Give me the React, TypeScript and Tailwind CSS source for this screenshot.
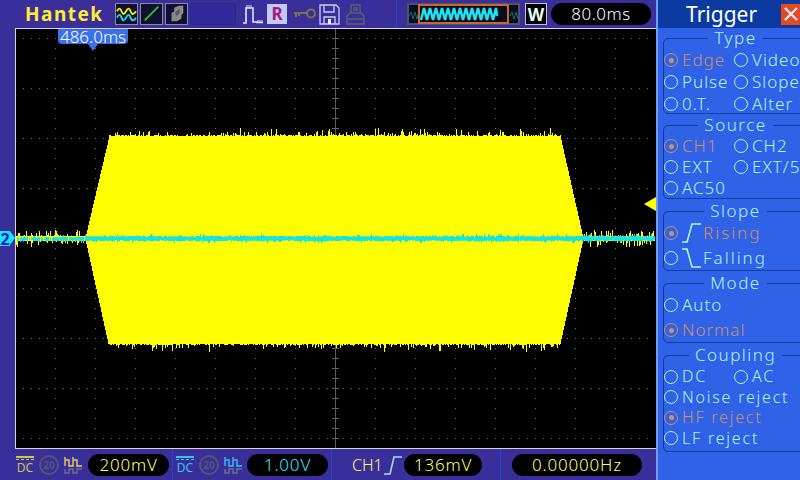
import type { ReactNode } from 'react';

function rng(seed: number) {
  let s = seed;
  return () => {
    s = (s * 1664525 + 1013904223) % 4294967296;
    return s / 4294967296;
  };
}

function spike(r: () => number) {
  const v = r();
  if (v > 0.96) return 5 + Math.floor(r() * 4);
  if (v > 0.8) return 2 + Math.floor(r() * 3);
  return Math.floor(r() * 2);
}

// waveform columns, in page coordinates
function buildWave() {
  const r = rng(7);
  let yellow = '';
  let cyan = '';
  for (let x = 16; x < 655; x++) {
    let top = 236 - (r() > 0.7 ? 1 + Math.floor(r() * 6) : 0);
    let bottom = 240 + (r() > 0.7 ? 1 + Math.floor(r() * 6) : 0);
    const inside = x >= 85 && x <= 583;
    if (inside) {
      let t = 136;
      let b = 343;
      if (x < 109) {
        t = 238 - ((x - 85) * 102) / 24;
        b = 238 + ((x - 85) * 105) / 23;
      } else if (x > 560) {
        t = 238 - ((583 - x) * 102) / 23;
        b = 238 + ((583 - x) * 105) / 23;
      }
      const flat = x >= 109 && x <= 560;
      top = Math.round(t) - (flat ? spike(r) : 0);
      bottom = Math.round(b) + (flat ? spike(r) : 0);
    }
    yellow += `M${x} ${top}V${bottom + 1}`;
    const ct = 236 + (r() > 0.75 ? 1 : 0) - (r() > 0.88 ? 1 + Math.floor(r() * 2) : 0);
    const cb = 241 - (r() > 0.75 ? 1 : 0) + (r() > 0.88 ? 1 + Math.floor(r() * 2) : 0);
    // the trace is thinner and broken where it runs next to the yellow noise on the left
    if (x >= 85 || r() > 0.2) cyan += `M${x} ${x < 85 ? ct + 1 : ct}V${cb}`;
  }
  return { yellow, cyan };
}

const wave = buildWave();

function Grid() {
  const dots: ReactNode[] = [];
  for (let y = 38; y < 448; y += 50) {
    for (let x = 23; x < 655; x += 8) {
      dots.push(<rect key={`h${y}-${x}`} x={x} y={y} width={1} height={1} fill="#757575" />);
    }
  }
  for (let x = 55; x < 655; x += 40) {
    if (x === 335) continue;
    for (let y = 48; y < 448; y += 10) {
      dots.push(<rect key={`v${x}-${y}`} x={x} y={y} width={1} height={1} fill="#757575" />);
    }
  }
  for (let y = 38; y < 448; y += 10) {
    dots.push(<rect key={`t${y}`} x={332} y={y} width={7} height={1} fill="#666" />);
  }
  for (let x = 23; x < 655; x += 8) {
    dots.push(<rect key={`c${x}`} x={x} y={235} width={1} height={7} fill="#666" />);
  }
  return <g>{dots}</g>;
}

function Plot() {
  return (
    <div className="relative flex-1 border-t border-b border-l border-[#d5d5f2] bg-black">
      <svg className="block h-[419px] w-[640px]" viewBox="16 29 640 419" shapeRendering="crispEdges">
        <Grid />
        <rect x={335} y={29} width={1} height={419} fill="#5c5c5c" />
        <path d={wave.yellow} stroke="#ffff00" strokeWidth={1} fill="none" />
        <path d={wave.cyan} stroke="#11e5e5" strokeWidth={1} fill="none" />
      </svg>
      <div className="absolute top-0 left-[42px] flex h-[15px] w-[70px] items-center justify-center rounded-b-[4px] bg-[#3a70ea] text-[17px] leading-none font-light text-white">
        486.0ms
        <div className="absolute top-[15px] left-[30px] h-0 w-0 border-x-[5px] border-t-[7px] border-x-transparent border-t-[#3a70ea]" />
      </div>
      <div className="absolute top-[168px] right-0 h-0 w-0 border-y-[7px] border-r-[12px] border-y-transparent border-r-[#ffff00]" />
    </div>
  );
}

function IconBox({ children }: { children: ReactNode }) {
  return <div className="h-[22px] w-[23px] border border-[#8a8a9a] bg-[#101030]">{children}</div>;
}

function TopBar() {
  return (
    <div className="flex h-[28px] items-center bg-[#3a2e9a]">
      <div className="ml-[25px] w-[78px] font-['DejaVu_Sans',sans-serif] text-[19px] leading-none font-bold tracking-[1.5px] whitespace-nowrap text-[#ffee33]">Hantek</div>
      <div className="ml-[12px] flex gap-[2px]">
        <IconBox>
          <svg viewBox="0 0 23 22" className="h-full w-full" fill="none" strokeWidth={2}>
            <path d="M1 8q3-6 5 0t5 0 5 0 6 0" stroke="#ffee00" />
            <path d="M1 15q3-6 5 0t5 0 5 0 6 0" stroke="#19e0f0" />
          </svg>
        </IconBox>
        <IconBox>
          <svg viewBox="0 0 23 22" className="h-full w-full" fill="none">
            <path d="M4 18L19 3" stroke="#22cc22" strokeWidth={2} />
          </svg>
        </IconBox>
        <IconBox>
          <svg viewBox="0 0 23 22" className="h-full w-full">
            <path d="M6 19V10L9 8V4L14 2H19V10L17 12V16L12 19Z" fill="#8a8a8a" />
            <path d="M10 9L15 5V10L11 14Z" fill="#5a5a5a" />
          </svg>
        </IconBox>
      </div>
      <div className="ml-[2px] h-[22px] w-[46px] rounded-[3px] border border-[#232a80] bg-[#33299a]" />
      <svg viewBox="0 0 22 22" className="ml-[6px] h-[22px] w-[22px]" fill="none" stroke="#dfe6ff">
        <path d="M1 20H4V5H11V19H15V19.5H21" strokeWidth={1.6} />
        <path d="M5 2V5M7 2V5M9 2V5M3 17H5M16 17V20M18 17V20M20 17V20" strokeWidth={1} />
      </svg>
      <div className="ml-[3px] flex h-[20px] w-[20px] items-center justify-center bg-[#c4c8f4] font-['DejaVu_Sans',sans-serif] text-[17px] font-bold text-[#a01a80]">R</div>
      <svg viewBox="0 0 23 14" className="ml-[6px] h-[14px] w-[23px]" fill="none" stroke="#75754a" strokeWidth={2}>
        <path d="M1 6H15M3 6V10M6 6V9" />
        <circle cx={18} cy={6.5} r={4} />
      </svg>
      <svg viewBox="0 0 21 21" className="ml-[3px] h-[21px] w-[21px]" fill="none" stroke="#c8d0f5" strokeWidth={1.3}>
        <path d="M1 1H17L20 4V20H1Z" />
        <path d="M5 1V8H15V1M5 20V13H16V20" />
        <rect x={9} y={15} width={3} height={5} fill="#eef" stroke="none" />
      </svg>
      <svg viewBox="0 0 21 21" className="ml-[5px] h-[21px] w-[21px]" fill="none" stroke="#5f5f72" strokeWidth={1.4}>
        <path d="M6 9V1H15V9M2 20V12L5 9H16L19 12V20Z" />
        <path d="M3 15H18M8 4H13M8 6H13" />
      </svg>
      <div className="ml-[30px] h-full w-[1px] bg-[#2343c8]" />
      <div className="relative ml-[10px] flex h-[22px] w-[113px] items-center bg-[#50506a] p-[2px]">
        <svg viewBox="0 0 109 18" className="h-[18px] w-[109px] bg-[#06101c]" fill="none">
          <path d="M0 11l2-4 2 7 2-7 2 7 2-7 0 4" stroke="#0d6e78" strokeWidth={1} />
          <path d="M12 15l3-12 3 12 3-12 3 12 3-12 3 12 3-12 3 12 3-12 3 12 3-12 3 12 3-12 3 12 3-12 3 12 3-12 3 12 3-12 3 12 3-12 3 12 3-12 3 12 3-12 1 8" stroke="#1fe2f2" strokeWidth={2.5} />
          <path d="M101 11l2-4 2 7 2-7 2 7" stroke="#0d6e78" strokeWidth={1} />
        </svg>
        <div className="absolute top-[1px] left-[11px] h-[20px] w-[91px] border-2 border-[#d4652a]" />
      </div>
      <div className="ml-[5px] flex h-[22px] w-[22px] items-center justify-center border border-[#c0c0d0] bg-black font-['DejaVu_Sans',sans-serif] text-[17px] leading-none font-bold text-[#e6fff2]">W</div>
      <div className="ml-[4px] flex h-[22px] w-[100px] items-center justify-center rounded-full bg-black text-[17px] font-light tracking-[0.5px] text-white">80.0ms</div>
    </div>
  );
}

function Pulses({ color }: { color: string }) {
  return (
    <svg viewBox="0 0 19 20" className="h-[20px] w-[19px]" fill="none" strokeWidth={1.4}>
      <path d="M1 11V5H5V11H9V5H13V11H18M1 2V4M9 2V4" stroke={color} />
      <path d="M1 14V18H5V14H9V18H13V14H18" stroke="#6f6f92" />
    </svg>
  );
}

function DcIcon({ color }: { color: string }) {
  return (
    <div className="w-[18px] text-center">
      <div className="h-[2px]" style={{ backgroundColor: color }} />
      <div className="mt-[1px] h-[1px] border-t border-dashed" style={{ borderColor: color }} />
      <div className="mt-[1px] font-['Liberation_Sans',sans-serif] text-[12px] leading-[13px]" style={{ color }}>DC</div>
    </div>
  );
}

function Twenty() {
  return (
    <div className="flex h-[20px] w-[20px] items-center justify-center rounded-full border-2 border-[#55556e] text-[10px] leading-none font-bold text-[#55556e]">20</div>
  );
}

function Pill({ className, children }: { className: string; children: ReactNode }) {
  return (
    <div className={`flex h-[22px] items-center justify-center rounded-full bg-black text-[17px] font-light tracking-[0.8px] ${className}`}>{children}</div>
  );
}

function Rising({ color }: { color: string }) {
  return (
    <svg viewBox="0 0 18 20" className="h-[20px] w-[18px]" fill="none" stroke={color} strokeWidth={1.6}>
      <path d="M0 19H6L10 2H18" />
    </svg>
  );
}

function BottomBar() {
  return (
    <div className="flex h-[31px] items-center bg-[#3a2e9a] pl-[16px]">
      <DcIcon color="#c8c84c" />
      <div className="ml-[5px]"><Twenty /></div>
      <div className="ml-[5px]"><Pulses color="#e8d860" /></div>
      <Pill className="ml-[5px] w-[81px] text-[#ffff66]">200mV</Pill>
      <div className="ml-[3px] h-full w-[1px] bg-[#2343c8]" />
      <div className="ml-[3px]"><DcIcon color="#33c4ee" /></div>
      <div className="ml-[5px]"><Twenty /></div>
      <div className="ml-[5px]"><Pulses color="#33c4ee" /></div>
      <Pill className="ml-[4px] w-[81px] text-[#33e6ff]">1.00V</Pill>
      <div className="ml-[3px] h-full w-[1px] bg-[#2343c8]" />
      <span className="ml-[20px] w-[27px] text-[16px] font-light text-[#ffff66]">CH1</span>
      <div className="ml-[5px]"><Rising color="#a8d8ff" /></div>
      <Pill className="ml-[2px] w-[78px] text-[#ffff66]">136mV</Pill>
      <div className="ml-[18px] h-full w-[1px] bg-[#2343c8]" />
      <Pill className="ml-[11px] w-[130px] text-[#ffff66]">0.00000Hz</Pill>
    </div>
  );
}

const ORANGE = 'text-[#cf9068]';
const CYAN = 'text-[#b4f2ff]';

function Radio({ on }: { on?: boolean }) {
  return (
    <span className={`flex h-[14px] w-[14px] shrink-0 items-center justify-center rounded-full border ${on ? 'border-[#cf9068]' : 'border-[#b4f2ff]'}`}>
      {on && <span className="h-[5px] w-[5px] rounded-full bg-[#cf9068]" />}
    </span>
  );
}

function Opt({ label, on, wide }: { label: string; on?: boolean; wide?: boolean }) {
  return (
    <div className={`flex items-center gap-[4px] whitespace-nowrap ${on ? ORANGE : CYAN} ${wide ? 'col-span-2' : ''}`}>
      <Radio on={on} />
      <span>{label}</span>
    </div>
  );
}

function Group({ title, className, children }: { title: string; className: string; children: ReactNode }) {
  return (
    <fieldset className={`mr-[-8px] ml-[5px] rounded-l-[5px] border border-[#123c9e] ${className}`}>
      <legend className={`mx-auto h-[20px] px-[6px] text-[17px] leading-[20px] tracking-[1.5px] ${CYAN}`}>{title}</legend>
      {children}
    </fieldset>
  );
}

function Slope({ down }: { down?: boolean }) {
  return (
    <svg viewBox="0 0 20 20" className="ml-[4px] h-[20px] w-[20px]" fill="none" stroke="#b4f2ff" strokeWidth={1.6}>
      <path d={down ? 'M0 1H5L10 19H19' : 'M0 19H5L10 1H19'} />
    </svg>
  );
}

function Sidebar() {
  return (
    <div className="flex w-[144px] flex-col overflow-hidden border-l-2 border-[#6f9cf5] bg-[#2f62e6] text-[17px] leading-[20px] font-light tracking-[1px]">
      <div className="flex h-[28px] shrink-0 items-center bg-[#0b3aa0] pl-[28px]">
        <span className="text-[21px] leading-none font-normal tracking-normal text-white">Trigger</span>
        <div className="ml-[24px] flex h-[21px] w-[21px] items-center justify-center bg-[#e84a20]">
          <svg viewBox="0 0 16 16" className="h-[16px] w-[16px]" fill="none" stroke="#dfe8ff" strokeWidth={2.4}>
            <path d="M2 2L14 14M14 2L2 14" />
          </svg>
        </div>
      </div>
      <Group title="Type" className="h-[86px]">
        <div className="mt-[2px] grid grid-cols-[70px_1fr] gap-y-[2px]">
          <Opt label="Edge" on />
          <Opt label="Video" />
          <Opt label="Pulse" />
          <Opt label="Slope" />
          <Opt label="0.T." />
          <Opt label="Alter" />
        </div>
      </Group>
      <Group title="Source" className="mt-[1px] h-[84px]">
        <div className="mt-[1px] grid grid-cols-[70px_1fr] gap-y-[1px]">
          <Opt label="CH1" on />
          <Opt label="CH2" />
          <Opt label="EXT" />
          <Opt label="EXT/5" />
          <Opt label="AC50" />
        </div>
      </Group>
      <Group title="Slope" className="mt-[2px] h-[70px]">
        <div className="mt-[2px] flex flex-col gap-[5px]">
          <div className={`flex items-center ${ORANGE}`}><Radio on /><Slope /><span className="ml-[1px] tracking-[2px]">Rising</span></div>
          <div className={`flex items-center ${CYAN}`}><Radio /><Slope down /><span className="ml-[1px] tracking-[2px]">Falling</span></div>
        </div>
      </Group>
      <Group title="Mode" className="mt-[2px] h-[70px]">
        <div className="mt-[2px] flex flex-col gap-[5px]">
          <Opt label="Auto" />
          <Opt label="Normal" on />
        </div>
      </Group>
      <Group title="Coupling" className="mt-[2px] h-[107px]">
        <div className="mt-[2px] grid grid-cols-[70px_1fr] gap-y-[1.67px] text-[16px] leading-[19px] tracking-[1.8px]">
          <Opt label="DC" />
          <Opt label="AC" />
          <Opt label="Noise reject" wide />
          <Opt label="HF reject" on wide />
          <Opt label="LF reject" wide />
        </div>
      </Group>
    </div>
  );
}

export default function App() {
  return (
    <div className="relative flex h-[480px] w-[800px] overflow-hidden bg-[#3a2e9a] font-['Roboto',sans-serif]">
      <div className="flex w-[656px] flex-col">
        <TopBar />
        <div className="flex flex-1">
          <div className="w-[15px]" />
          <Plot />
        </div>
        <BottomBar />
      </div>
      <Sidebar />
      <div className="absolute top-[231px] left-0 flex h-[15px] w-[10px] items-center justify-center bg-[#19e6f0] font-['DejaVu_Sans',sans-serif] text-[16px] leading-none font-bold text-[#1020c8]">
        2
        <div className="absolute top-0 left-[10px] h-0 w-0 border-y-[7.5px] border-l-[5px] border-y-transparent border-l-[#19e6f0]" />
      </div>
    </div>
  );
}
